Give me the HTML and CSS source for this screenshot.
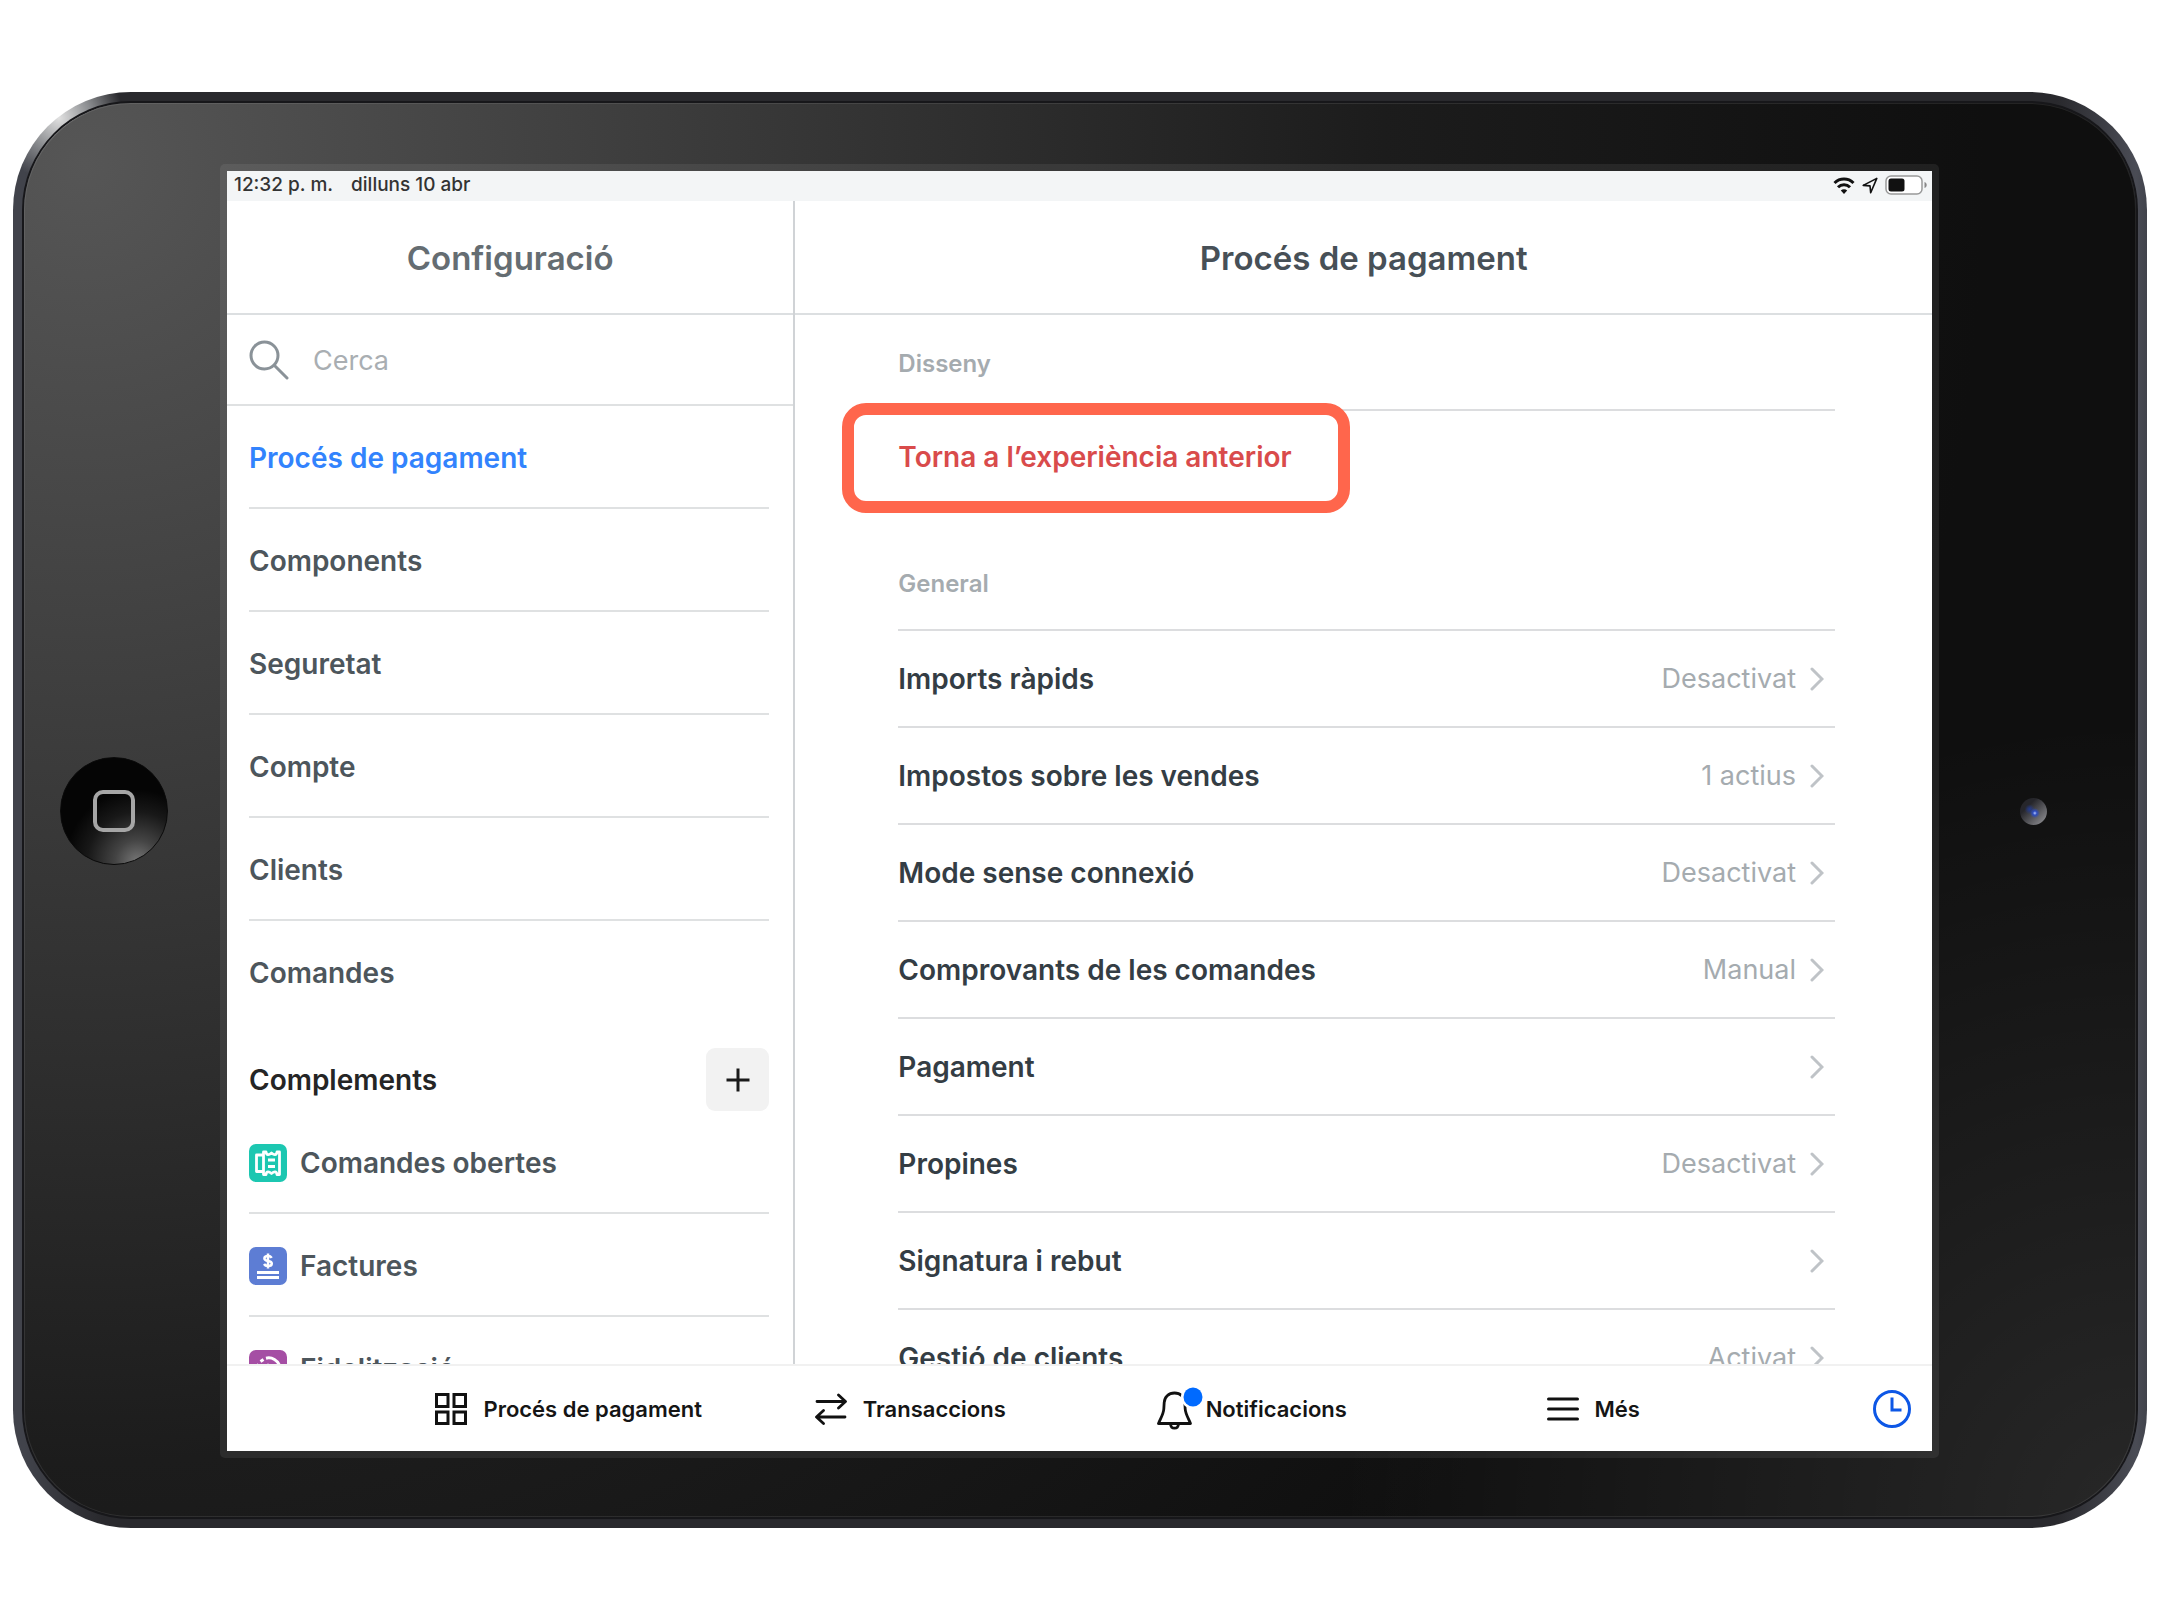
FILE: index.html
```html
<!DOCTYPE html>
<html lang="ca">
<head>
<meta charset="utf-8">
<meta name="viewport" content="width=device-width, initial-scale=1">
<title>Configuració</title>
<link rel="stylesheet" href="styles.css">
</head>
<body>
<div class="device">
  <div class="glass">
    <div class="bezel bezel-left"><span class="home"><span class="home-mark"></span></span></div>
    <div class="screen">
      <div class="status">
        <span>12:32 p. m.</span>
        <span>dilluns 10 abr</span>
        <span class="status-icons">
          <svg width="22" height="17" viewBox="0 0 22 17" fill="none" stroke="#111" stroke-width="3"><path d="M1.500 6a13.500 13.500 0 0 1 19 0"/><path d="M5 10.300a8.500 8.500 0 0 1 12 0"/><path d="M11 17l-3.200-3.400a4.500 4.500 0 0 1 6.400 0z" fill="#111" stroke="none"/></svg>
          <svg width="16" height="17" viewBox="0 0 16 17" fill="none" stroke="#111" stroke-width="1.600" stroke-linejoin="round"><path d="M14.800 1.400L1.200 8.400l6.800.5.7 6.900z"/></svg>
          <svg width="43" height="20" viewBox="0 0 43 20"><rect x="1" y="1" width="36" height="18" rx="5" fill="#fff" stroke="#999" stroke-width="1.500"/><rect x="3.500" y="3.500" width="16" height="13" rx="2.500" fill="#111"/><path d="M39.500 7v6c1.600-.5 2.200-1.600 2.200-3s-.6-2.500-2.200-3z" fill="#888"/></svg>
        </span>
      </div>
      <div class="panes">
        <aside class="side">
          <h1 class="title title-side">Configuració</h1>
          <label class="search">
            <svg width="40" height="40" viewBox="0 0 40 40" fill="none" stroke="#8a9298" stroke-width="3" stroke-linecap="round"><circle cx="15.500" cy="15.500" r="13.500"/><path d="M25.500 25.500L38 38"/></svg>
            <input type="search" class="search-input" placeholder="Cerca" aria-label="Cerca">
          </label>
          <nav class="side-nav">
            <a class="side-link current" href="#pagament">Procés de pagament</a>
            <a class="side-link" href="#components">Components</a>
            <a class="side-link" href="#seguretat">Seguretat</a>
            <a class="side-link" href="#compte">Compte</a>
            <a class="side-link" href="#clients">Clients</a>
            <a class="side-link" href="#comandes">Comandes</a>
            <div class="addons">
              <h2 class="addons-title">Complements</h2>
              <button class="add" type="button" aria-label="Afegeix"><svg width="24" height="24" viewBox="0 0 24 24" stroke="#1a1a1a" stroke-width="3"><path d="M12 0.500v23M0.500 12h23"/></svg></button>
            </div>
            <a class="side-link" href="#obertes">
              <svg width="38" height="38" viewBox="0 0 38 38"><rect width="38" height="38" rx="7" fill="#1cc7b1"/><g fill="none" stroke="#fff" stroke-width="2.800" stroke-linejoin="round"><path d="M14 11H7.500v16.500H14"/><path d="M14.500 8h2.500c.5 3.500 3 3 5.500 1 2.500 2 5 2.500 5.500-1h2.500v22.500H28c-.5-3.500-3-3-5.500-1-2.500-2-5-2.500-5.500 1h-2.500z"/><path d="M19 16h7M19 22.500h7"/></g></svg>
              Comandes obertes</a>
            <a class="side-link" href="#factures">
              <svg width="38" height="38" viewBox="0 0 38 38"><rect width="38" height="38" rx="7" fill="#5d7dd4"/><g fill="none" stroke="#fff"><path d="M22.700 10.800c-.8-1.300-2.100-1.800-3.700-1.800-2.200 0-3.600 1-3.600 2.500 0 3.600 7.400 1.300 7.400 4.900 0 1.600-1.500 2.600-3.800 2.600-1.800 0-3.200-.7-4-2M19 6.500v15" stroke-width="2.500"/><path d="M8 25.500h22M8 30.500h22" stroke-width="3"/></g></svg>
              Factures</a>
            <a class="side-link" href="#fidelitzacio">
              <svg width="38" height="38" viewBox="0 0 38 38"><rect width="38" height="38" rx="7" fill="#a54ea4"/><g fill="none" stroke="#fff" stroke-width="3"><path d="M17 8.200a11.500 11.500 0 1 1-8 15.500"/><path d="M8 17.500l1.500-3.500M11.500 11.500l3-2"/></g><path d="M19 13l2 4.200 4.600.6-3.400 3.200.9 4.600-4.100-2.200-4.100 2.200.9-4.600-3.400-3.200 4.600-.6z" fill="#fff"/></svg>
              Fidelització</a>
          </nav>
        </aside>
        <main class="detail">
          <h1 class="title">Procés de pagament</h1>
          <div class="detail-body">
            <h2 class="section">Disseny</h2>
            <div class="revert-row">
              <button class="revert" type="button">Torna a l’experiència anterior</button>
              <span class="highlight"></span>
            </div>
            <h2 class="section">General</h2>
            <a class="row" href="#imports">Imports ràpids<span class="value">Desactivat</span><svg class="chevron" viewBox="0 0 14 24"><path d="M2 2l10 10L2 22"/></svg></a>
            <a class="row" href="#impostos">Impostos sobre les vendes<span class="value">1 actius</span><svg class="chevron" viewBox="0 0 14 24"><path d="M2 2l10 10L2 22"/></svg></a>
            <a class="row" href="#mode">Mode sense connexió<span class="value">Desactivat</span><svg class="chevron" viewBox="0 0 14 24"><path d="M2 2l10 10L2 22"/></svg></a>
            <a class="row" href="#comprovants">Comprovants de les comandes<span class="value">Manual</span><svg class="chevron" viewBox="0 0 14 24"><path d="M2 2l10 10L2 22"/></svg></a>
            <a class="row" href="#pagaments">Pagament<span class="value"></span><svg class="chevron" viewBox="0 0 14 24"><path d="M2 2l10 10L2 22"/></svg></a>
            <a class="row" href="#propines">Propines<span class="value">Desactivat</span><svg class="chevron" viewBox="0 0 14 24"><path d="M2 2l10 10L2 22"/></svg></a>
            <a class="row" href="#signatura">Signatura i rebut<span class="value"></span><svg class="chevron" viewBox="0 0 14 24"><path d="M2 2l10 10L2 22"/></svg></a>
            <a class="row" href="#gestio">Gestió de clients<span class="value">Activat</span><svg class="chevron" viewBox="0 0 14 24"><path d="M2 2l10 10L2 22"/></svg></a>
          </div>
        </main>
      </div>
      <nav class="tabs">
        <a class="tab" href="#proces"><svg width="32" height="32" viewBox="0 0 32 32" fill="none" stroke="#111" stroke-width="3"><path d="M1.500 1.500h11.500v12H1.500zM19 1.500h11.500v12H19zM1.500 19h11.500v11.500H1.500zM19 19h11.500v11.500H19z"/></svg>Procés de pagament</a>
        <a class="tab" href="#transaccions"><svg width="32" height="32" viewBox="0 0 32 32" fill="none" stroke="#111" stroke-width="2.800" stroke-linecap="round" stroke-linejoin="round"><path d="M2 8.500h28M23.500 2l7 6.500-7 6.500M30 24H2M8.500 17.500L1.500 24l7 6.500"/></svg>Transaccions</a>
        <a class="tab tab-bell" href="#notificacions"><svg width="46" height="44" viewBox="0 -3 46 44"><path d="M17.500 3C11.500 3 7.500 7 7.200 12.500L6.800 19C6.500 24 3.500 28.500 1.500 33.500h32C31.500 28.500 28.500 24 28.200 19l-.4-6.500C27.500 7 23.500 3 17.500 3zM13.500 34c.2 2.800 1.500 4.200 4 4.200s3.800-1.400 4-4.200" fill="none" stroke="#111" stroke-width="2.800" stroke-linejoin="round"/><circle cx="36" cy="7" r="12" fill="#fff"/><circle cx="36" cy="7" r="9.500" fill="#006aff"/></svg>Notificacions</a>
        <a class="tab" href="#mes"><svg width="32" height="24" viewBox="0 0 32 24" stroke="#111" stroke-width="3" stroke-linecap="round"><path d="M1.500 2h29M1.500 12h29M1.500 22h29"/></svg>Més</a>
        <a class="clock" href="#hores" aria-label="Rellotge"><svg width="38" height="38" viewBox="0 0 38 38" fill="none" stroke="#0d57e6" stroke-width="3"><circle cx="19" cy="19" r="17.500"/><path d="M19 7.500V20h9.500"/></svg></a>
      </nav>
    </div>
    <div class="bezel bezel-right"><span class="camera"></span></div>
  </div>
</div>
</body>
</html>
```
FILE: styles.css
```css
* { box-sizing: border-box; }

body {
  margin: 0;
  height: 100vh;
  padding: 92px 13px;
  background: #fff;
  font-family: Inter, "Liberation Sans", sans-serif;
  font-weight: 600;
  font-size: 28px;
  line-height: 36px;
  color: #4d565c;
}

a { color: inherit; text-decoration: none; }
button { font: inherit; border: 0; padding: 0; cursor: pointer; }
svg { flex: none; display: block; }
h1, h2 { margin: 0; font-weight: 600; }

/* tablet body */
.device {
  height: 100%;
  padding: 11px;
  border-radius: 118px;
  background:
    radial-gradient(circle at 46px 26px, #e0e0e0 0, #8b8d90 32px, transparent 64px),
    linear-gradient(90deg, #41434b 0, #41434b 11px, transparent 90px, transparent calc(100% - 90px), #4a4c55 calc(100% - 11px), #41434b 100%),
    #29292d;
}

.glass {
  height: 100%;
  display: grid;
  grid-template-columns: 196px minmax(0, 1fr) 197px;
  padding: 61px 0 59px;
  border-radius: 107px;
  box-shadow: 0 0 0 2px #17171a, inset 0 0 0 1px rgba(255, 255, 255, .09);
  background:
    radial-gradient(circle at 100% 100%, rgba(255, 255, 255, .1) 0, transparent 800px),
    radial-gradient(circle at 60px 60px, #565656 0, #353535 740px, #1c1c1c 1300px, #0f0f0f 1900px);
}

.bezel { display: flex; align-items: center; justify-content: center; }
.bezel-left { padding-right: 17px; }
.bezel-right { padding-right: 8px; }

.home {
  display: grid;
  place-items: center;
  width: 108px;
  height: 108px;
  border-radius: 50%;
  border: 1px solid #0a0a0a;
  background: radial-gradient(circle at 72% 98%, #777 0, #444 22px, #181818 50px, #050505 72px);
}
.home-mark { width: 42px; height: 42px; border: 4px solid #a6a6a6; border-radius: 10px; }

.camera {
  width: 27px;
  height: 27px;
  border-radius: 50%;
  background:
    radial-gradient(circle at 55% 56%, #b8c8ff 0, #2c4cc0 2px, transparent 5px),
    radial-gradient(circle at 36% 42%, #223a90 0, transparent 5px),
    linear-gradient(135deg, #26262b 30%, #88888c 90%);
}

/* screen */
.screen {
  min-height: 0;
  display: flex;
  flex-direction: column;
  border: 7px solid rgba(255, 255, 255, .07);
  border-radius: 5px;
  background: #fff padding-box;
}

.status {
  display: flex;
  align-items: center;
  gap: 18px;
  height: 30px;
  padding: 0 4px 2px 7px;
  background: #f3f5f6;
  color: #333;
  font-size: 19px;
  font-weight: 500;
  line-height: 28px;
}
.status-icons { display: flex; align-items: center; gap: 7px; margin-left: auto; }

.panes { flex: 1; min-height: 0; display: grid; grid-template-columns: 1fr 2fr; }
.side, .detail { min-width: 0; min-height: 0; overflow: hidden; }
.side { border-right: 2px solid #d0d3d6; }

.title {
  height: 114px;
  border-bottom: 2px solid #dcdfe1;
  font-size: 33px;
  line-height: 114px;
  text-align: center;
  color: #475057;
}
.title-side { color: #656d72; }

.search {
  display: flex;
  align-items: center;
  gap: 24px;
  height: 91px;
  padding: 0 22px;
  border-bottom: 2px solid #dfe1e2;
}
.search-input {
  flex: 1;
  min-width: 0;
  border: 0;
  padding: 2px 0 0;
  outline: 0;
  background: none;
  font: inherit;
  font-size: 27px;
  font-weight: 400;
}
.search-input::placeholder { color: #a9aeb2; opacity: 1; }

.side-nav { padding: 0 24px 0 22px; }
.side-link {
  display: flex;
  align-items: center;
  gap: 13px;
  height: 103px;
  padding-top: 2px;
  border-bottom: 2px solid #dfe1e2;
}
.side-link:has(+ .addons) { border-bottom-color: transparent; }
.current { color: #3283fd; }

.addons { display: flex; align-items: center; justify-content: space-between; margin-top: 24px; }
.addons-title { font-size: 28px; color: #252525; }
.add {
  display: grid;
  place-items: center;
  width: 63px;
  height: 63px;
  border-radius: 9px;
  background: #f2f2f2;
}

.detail-body { padding: 0 97px 0 103px; }
.section {
  height: 96px;
  border-bottom: 2px solid #dcdddf;
  font-size: 24px;
  line-height: 97px;
  color: #a5abaf;
}
.revert-row { position: relative; height: 124px; }
.revert { height: 91px; background: none; color: #d94b4b; }
.highlight {
  position: absolute;
  top: -8px;
  left: -56px;
  width: 508px;
  height: 110px;
  border: 12px solid #ff664c;
  border-radius: 24px;
  pointer-events: none;
}

.row {
  display: flex;
  align-items: center;
  height: 97px;
  padding: 1px 11px 0 0;
  border-bottom: 2px solid #dcdddf;
  color: #343d44;
}
.value { margin-left: auto; margin-right: 14px; font-size: 27px; font-weight: 400; color: #a5abaf; }
.chevron { width: 14px; height: 24px; fill: none; stroke: #bfc3c7; stroke-width: 3; stroke-linecap: round; }

.tabs {
  display: grid;
  grid-template-columns: repeat(4, 1fr) 168px;
  align-items: center;
  height: 87px;
  padding-left: 171px;
  border-top: 2px solid #f1f1f1;
  font-size: 22px;
  color: #151515;
}
.tab { display: flex; align-items: center; justify-content: center; gap: 16px; }
.tab-bell { gap: 3px; }
.clock { justify-self: end; margin-right: 21px; }
```
